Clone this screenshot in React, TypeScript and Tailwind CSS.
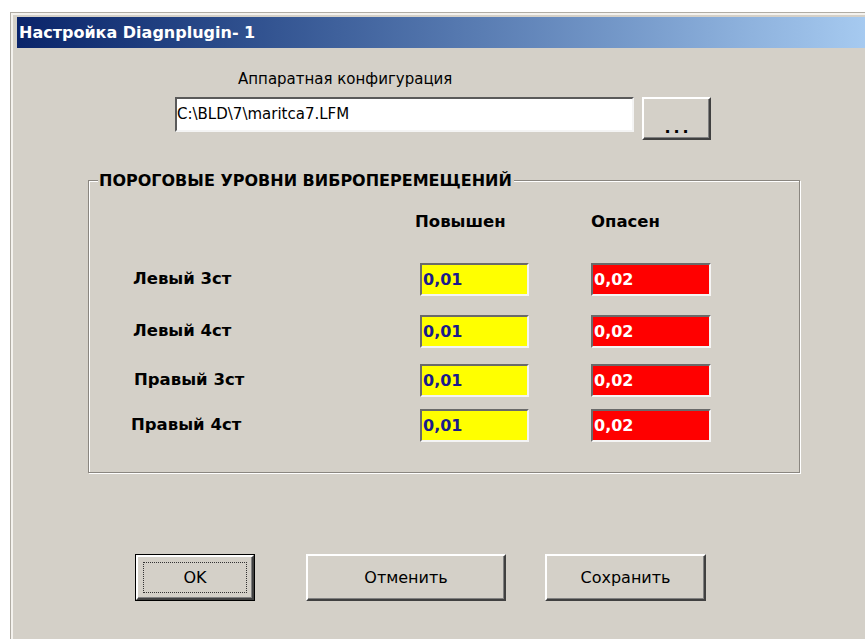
import React from 'react';

const rows = [
  { name: 'Левый 3ст', warn: '0,01', alarm: '0,02', rowClass: 'mt-[32px]', labelClass: '' },
  { name: 'Левый 4ст', warn: '0,01', alarm: '0,02', rowClass: 'mt-[19px]', labelClass: '' },
  { name: 'Правый 3ст', warn: '0,01', alarm: '0,02', rowClass: 'mt-[16px]', labelClass: 'ml-[1px]' },
  { name: 'Правый 4ст', warn: '0,01', alarm: '0,02', rowClass: 'mt-[12px]', labelClass: 'ml-[-2px]' },
];

// classic raised 3D button face
function RaisedButton({
  children,
  className = '',
  isDefault = false,
}: {
  children: React.ReactNode;
  className?: string;
  isDefault?: boolean;
}) {
  if (isDefault) {
    return (
      <div className={`border border-black ${className}`}>
        <div className="h-full border-2 border-t-white border-l-white border-r-[#404040] border-b-[#404040] shadow-[inset_-1px_-1px_0_#808080] p-[5px]">
          <div className="h-full border border-dotted border-[#333] flex items-center justify-center text-[16px] text-black">
            {children}
          </div>
        </div>
      </div>
    );
  }
  return (
    <div
      className={`border-2 border-t-white border-l-white border-r-[#404040] border-b-[#404040] shadow-[inset_-1px_-1px_0_#808080] flex items-center justify-center text-[16px] text-black ${className}`}
    >
      {children}
    </div>
  );
}

function ValueBox({ value, alarm }: { value: string; alarm?: boolean }) {
  return (
    <div
      className={`h-[33px] border-2 border-t-[#6a6a6a] border-l-[#6a6a6a] border-r-[#f4f4f4] border-b-[#f4f4f4] flex items-center pl-[1px] text-[16px] font-bold ${
        alarm ? 'bg-[#ff0000] text-white' : 'bg-[#ffff00] text-[#1a1a8c]'
      }`}
    >
      {value}
    </div>
  );
}

export default function App() {
  return (
    <div className="h-[639px] overflow-hidden bg-white pt-[12px] pl-[10px] font-['DejaVu_Sans',sans-serif]">
      {/* window frame */}
      <div className="h-[640px] border-t border-l border-[#b0aca4] bg-[#d4d0c8]">
        <div className="h-full border-t-2 border-l-2 border-[#f4f2ee] pt-[2px] pl-[4px]">
          {/* title bar */}
          <div className="h-[31px] flex items-center pl-[2px] pt-[1px] bg-linear-to-r from-[#0a246a] to-[#a6caf0] text-white font-bold text-[16px]">
            Настройка Diagnplugin- 1
          </div>

          {/* dialog body */}
          <div className="flex flex-col">
            <div className="mt-[22px] ml-[221px] text-[15px] leading-[18px] text-black">
              Аппаратная конфигурация
            </div>

            <div className="mt-[9px] ml-[158px] flex items-start gap-[8px]">
              <div className="w-[459px] h-[35px] bg-white border-2 border-t-[#5a5a5a] border-l-[#5a5a5a] border-r-[#f4f4f4] border-b-[#f4f4f4] flex items-center pl-0 text-[15px] text-black">
                C:\BLD\7\maritca7.LFM
              </div>
              <RaisedButton className="w-[69px] h-[43px] !items-end pb-[2px]">
                <span className="font-bold text-[16px] tracking-[3px] leading-[16px] pl-[3px]">...</span>
              </RaisedButton>
            </div>

            {/* threshold group box */}
            <div className="relative mt-[40px] ml-[71px] w-[712px] h-[293px] border border-[#8a8680] shadow-[inset_1px_1px_0_#fff,1px_1px_0_#fff]">
              <div className="absolute left-[9px] top-[-10px] bg-[#d4d0c8] pl-[1px] pr-[2px] text-[16px] leading-[20px] font-bold text-black whitespace-pre">
                ПОРОГОВЫЕ УРОВНИ ВИБРОПЕРЕМЕЩЕНИЙ
              </div>

              <div className="flex flex-col pl-[44px]">
                <div className="mt-[31px] grid grid-cols-[287px_109px_62px_120px] text-[16.5px] leading-[19px] font-bold text-black">
                  <div />
                  <div className="ml-[-5px] whitespace-nowrap">Повышен</div>
                  <div />
                  <div>Опасен</div>
                </div>

                {rows.map((r) => (
                  <div
                    key={r.name}
                    className={`grid grid-cols-[287px_109px_62px_120px] items-center ${r.rowClass}`}
                  >
                    <div className={`text-[16.5px] font-bold text-black ${r.labelClass}`}>{r.name}</div>
                    <ValueBox value={r.warn} />
                    <div />
                    <ValueBox value={r.alarm} alarm />
                  </div>
                ))}
              </div>
            </div>

            <div className="mt-[81px] ml-[118px] flex">
              <RaisedButton isDefault className="w-[120px] h-[47px]">
                OK
              </RaisedButton>
              <RaisedButton className="ml-[51px] w-[200px] h-[47px]">Отменить</RaisedButton>
              <RaisedButton className="ml-[39px] w-[161px] h-[47px]">Сохранить</RaisedButton>
            </div>
          </div>
        </div>
      </div>
    </div>
  );
}
